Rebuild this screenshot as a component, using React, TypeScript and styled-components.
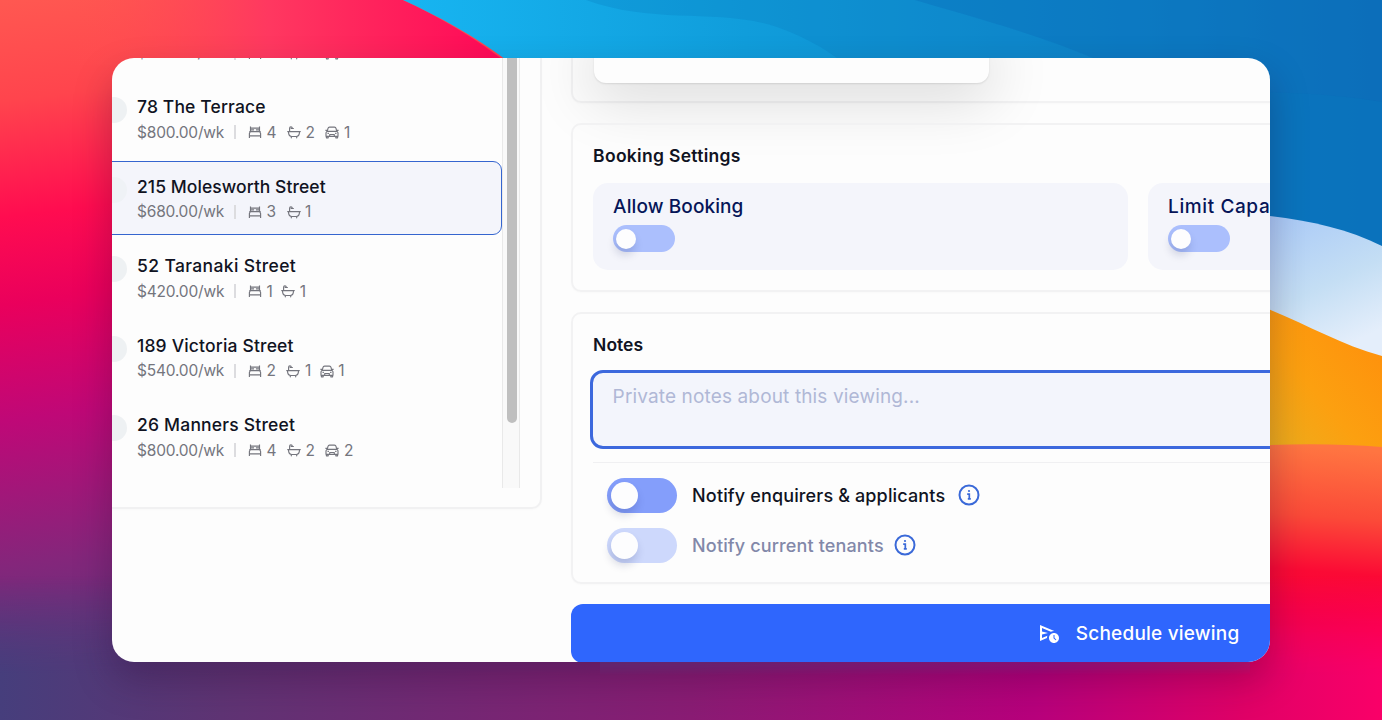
import React from "react";
import styled, { createGlobalStyle } from "styled-components";
import { MdOutlineScheduleSend } from "react-icons/md";

const GlobalStyle = createGlobalStyle`
  * { box-sizing: border-box; }
  body { margin: 0; overflow: hidden; font-family: Inter, "Open Sans", sans-serif; color: #101322; }
`;

const Desktop = styled.div`
  position: relative;
  width: 1382px;
  height: 720px;
  padding: 58px 112px;
  overflow: hidden;
  background: #16a5e5;
`;

const WallpaperSvg = styled.svg`
  position: absolute;
  inset: 0;
`;

const Window = styled.main`
  position: relative;
  display: flex;
  align-items: flex-start;
  gap: 30px;
  height: 604px;
  overflow: hidden;
  border-radius: 22px;
  background: #fdfdfd;
`;

const WindowShadow = styled.div`
  position: relative;
  border-radius: 22px;
  box-shadow: 0 18px 38px rgba(30, 5, 40, 0.27);
`;

const ListPanel = styled.section`
  flex: none;
  width: 470px;
  height: 452px;
  margin: -1px 0 0 -40px;
  padding: 0 20px 20px;
  border: 2px solid #f1f1f2;
  border-top: 0;
  border-radius: 0 0 10px 10px;
  box-shadow: 0 1px 2px rgba(0, 0, 0, 0.02);
`;

const Scroller = styled.div`
  display: flex;
  height: 431px;
  overflow: hidden;
`;

const Rows = styled.div`
  display: flex;
  flex: 1;
  flex-direction: column;
  gap: 5px;
  margin-top: -55.5px;
`;

const Row = styled.article<{ $selected?: boolean }>`
  display: flex;
  flex: none;
  gap: 10px;
  height: 74.5px;
  padding: 12px 15px 0 7px;
  border: 1px solid ${(p) => (p.$selected ? "#3565cf" : "transparent")};
  border-radius: 9px;
  background: ${(p) => (p.$selected ? "#f4f5fb" : "transparent")};
`;

const Avatar = styled.span<{ $selected?: boolean }>`
  flex: none;
  width: 26px;
  height: 26px;
  margin: 3px 0 0 -1px;
  border-radius: 50%;
  background: ${(p) => (p.$selected ? "#eff2f6" : "#eef1f3")};
`;

const Address = styled.h3<{ $spacing: number }>`
  margin: 0;
  padding-top: 1px;
  font-size: 17.5px;
  font-weight: 500;
  line-height: 24.5px;
  letter-spacing: ${(p) => p.$spacing}px;
  white-space: nowrap;
`;

const Facts = styled.div`
  display: flex;
  align-items: center;
  height: 25px;
  color: #74757d;
  font-size: 15.5px;
`;

const Price = styled.span`
  width: 87px;
  letter-spacing: -0.2px;
  white-space: nowrap;
`;

const Divider = styled.i`
  width: 2px;
  height: 14px;
  margin: 0 12px 0 10px;
  background: #dcdcdf;
`;

const Fact = styled.span<{ $narrow: boolean }>`
  display: flex;
  align-items: center;
  gap: 4.5px;
  margin-right: ${(p) => (p.$narrow ? 8.5 : 10.5)}px;
`;

const Track = styled.div`
  display: flex;
  justify-content: center;
  width: 18px;
  border: solid #e9e9e9;
  border-width: 0 1px 0 1px;
  background: #f9f9f9;
  padding-left: 1px;
`;

const Thumb = styled.div`
  width: 10px;
  height: 366px;
  border-radius: 0 0 5px 5px;
  background: #bfbfbf;
`;

const Form = styled.div`
  display: flex;
  flex: none;
  flex-direction: column;
  width: 1134px;
  margin-left: -0.9px;
`;

const Card = styled.section<{ $height: number }>`
  flex: none;
  height: ${(p) => p.$height}px;
  margin-bottom: 20px;
  padding: 0 20px;
  border: 2px solid #f2f2f3;
  border-radius: 10px;
  box-shadow: 0 1px 2px rgba(0, 0, 0, 0.02);
`;

const TopCard = styled(Card)`
  margin-top: -20px;
`;

const Popover = styled.div`
  width: 395.5px;
  height: 42.5px;
  margin-left: 0.5px;
  border-radius: 0 0 12px 12px;
  background: #fdfdfd;
  box-shadow: 0 1px 2px rgba(0, 0, 0, 0.1), 0 12px 60px 4px rgba(0, 0, 0, 0.15);
`;

const Heading = styled.h2<{ $spacing: number; $gap: number }>`
  margin: 19px 0 ${(p) => p.$gap}px;
  font-size: 17.5px;
  font-weight: 600;
  line-height: 24px;
  letter-spacing: ${(p) => p.$spacing}px;
`;

const Options = styled.div`
  display: grid;
  grid-template-columns: 535px 535px;
  gap: 20px;
`;

const Option = styled.div`
  height: 87.5px;
  padding: 10.2px 20px 0;
  border-radius: 15px;
  background: #f4f5fb;
`;

const OptionLabel = styled.div<{ $wide?: boolean }>`
  height: 28px;
  margin-bottom: 4.8px;
  color: #061558;
  font-size: 19px;
  font-weight: 500;
  line-height: 28px;
  letter-spacing: ${(p) => (p.$wide ? 0.6 : 0.1)}px;
  white-space: nowrap;
`;

const Switch = styled.div<{ $large?: boolean; $color: string }>`
  display: flex;
  align-items: center;
  flex: none;
  width: ${(p) => (p.$large ? 70 : 62)}px;
  height: ${(p) => (p.$large ? 35 : 27)}px;
  padding-left: ${(p) => (p.$large ? 4 : 3)}px;
  border-radius: 18px;
  background: ${(p) => p.$color};

  &::before {
    content: "";
    width: ${(p) => (p.$large ? 27 : 20)}px;
    height: ${(p) => (p.$large ? 27 : 20)}px;
    border-radius: 50%;
    background: #fdfdfe;
    box-shadow: -1px 6px 9px rgba(20, 30, 90, 0.17);
  }
`;

const NoteBox = styled.div`
  height: 79.5px;
  margin: 0 -3px 12.5px;
  padding: 9.2px 19.5px 0;
  border: 3px solid #3c68dd;
  border-radius: 13px;
  background: #f3f5fc;
  color: #b0b8d6;
  font-size: 19px;
  line-height: 30px;
  letter-spacing: 0.14px;
`;

const Notifications = styled.div`
  display: flex;
  flex-direction: column;
  gap: 15px;
  padding: 15px 14px 0;
  border-top: 1px solid #f0f0f2;
`;

const Notify = styled.div<{ $muted?: boolean }>`
  display: flex;
  align-items: center;
  height: 35px;
  color: ${(p) => (p.$muted ? "#8288a9" : "#101322")};
  font-size: 18px;
  font-weight: 500;
`;

const NotifyText = styled.span<{ $width: number }>`
  width: ${(p) => p.$width}px;
  margin: 0 12px 0 15px;
  letter-spacing: 0.14px;
  white-space: nowrap;
`;

const Submit = styled.button`
  display: flex;
  align-items: center;
  justify-content: center;
  gap: 15px;
  flex: none;
  width: 1134px;
  height: 59.5px;
  padding: 0;
  border: 0;
  border-radius: 12px;
  background: #2f66fd;
  color: #fff;
  font: 500 19px Inter, sans-serif;
  letter-spacing: 0.2px;
`;

const BedIcon = () => (
  <svg width="14" height="14" viewBox="0 0 14 14" fill="none" stroke="currentColor" strokeWidth="1.15" strokeLinejoin="round">
    <path d="M2.500 1.600v4.900M11.500 1.600v4.900M2.500 3.100h9M2.500 4.900h3.600M7.900 4.900h3.600M1.300 6.600h11.400M2.300 6.600l-.9 2v4.400M11.700 6.600l.9 2v4.400M1.400 10.900h11.200" />
  </svg>
);

const BathIcon = () => (
  <svg width="14" height="14" viewBox="0 0 14 14" fill="none" stroke="currentColor" strokeWidth="1.15" strokeLinecap="round" strokeLinejoin="round">
    <path d="M.7 6.600h12.600M1.500 6.800c0 3 .9 4.700 3.200 4.700h4.600c2.300 0 3.200-1.700 3.200-4.700M2.600 6.400V3.300c0-1.900 2.500-1.900 2.700-.2M4.100 3.500h2.300M4.300 11.600v1.200M9.700 11.600v1.200" />
  </svg>
);

const CarIcon = () => (
  <svg width="14" height="14" viewBox="0 0 14 14" fill="none" stroke="currentColor" strokeWidth="1.15" strokeLinejoin="round">
    <path d="M2.200 6.300 3 3.300c.2-.8.700-1.200 1.500-1.200h5c.8 0 1.300.4 1.500 1.200l.8 3M.4 5.400h1.700M11.900 5.400h1.700M2 6.300h10l1 1.500v3.500H1V7.800zM1.400 11.300v1.500h1.800v-1.500M10.800 11.300v1.500h1.800v-1.500M4.700 11.200V9.500h4.600v1.700M2.500 8.300h1.400M10.100 8.300h1.400" />
  </svg>
);

const InfoIcon = () => (
  <svg width="22" height="22" viewBox="0 0 22 22" fill="none" stroke="#3a69d8" strokeWidth="2">
    <circle cx="11" cy="11" r="9.500" />
    <path d="M9.200 10.100h2.100v4.600M9.800 14.800h3" strokeWidth="1.700" />
    <circle cx="11" cy="7" r="1.100" fill="#3a69d8" stroke="none" />
  </svg>
);

const Wallpaper = () => (
  <WallpaperSvg width="1382" height="720" viewBox="0 0 1382 720">
    <defs>
      <linearGradient id="left" gradientUnits="userSpaceOnUse" x1="0" y1="0" x2="90" y2="715">
        <stop offset="0" stopColor="#ff5851" />
        <stop offset=".14" stopColor="#ff444d" />
        <stop offset=".3" stopColor="#ff0c50" />
        <stop offset=".42" stopColor="#ea005c" />
        <stop offset=".58" stopColor="#bf0877" />
        <stop offset=".78" stopColor="#84267b" />
        <stop offset="1" stopColor="#463e7c" />
      </linearGradient>
      <linearGradient id="topRed">
        <stop offset="0" stopColor="#ff524f" stopOpacity="0" />
        <stop offset=".45" stopColor="#ff3860" />
        <stop offset="1" stopColor="#ff0757" />
      </linearGradient>
      <linearGradient id="blue">
        <stop offset="0" stopColor="#17b5f1" />
        <stop offset=".35" stopColor="#109ddb" />
        <stop offset=".75" stopColor="#1085cb" />
        <stop offset="1" stopColor="#1070bc" />
      </linearGradient>
      <linearGradient id="ice" x1="0" y1="0" x2=".4" y2="1">
        <stop offset="0" stopColor="#a6c7f8" />
        <stop offset=".6" stopColor="#c4def4" />
        <stop offset="1" stopColor="#e4eefb" />
      </linearGradient>
      <linearGradient id="orange" x1="1" y1="0" x2="0" y2="1">
        <stop offset="0" stopColor="#ff8c0b" />
        <stop offset=".55" stopColor="#fca010" />
        <stop offset="1" stopColor="#e8b121" />
      </linearGradient>
      <linearGradient id="right" gradientUnits="userSpaceOnUse" x1="1290" y1="445" x2="1270" y2="720">
        <stop offset="0" stopColor="#ff7541" />
        <stop offset=".25" stopColor="#fb4a38" />
        <stop offset=".45" stopColor="#fb0a35" />
        <stop offset=".65" stopColor="#fc003c" />
        <stop offset="1" stopColor="#fc0070" />
      </linearGradient>
      <linearGradient id="bottom">
        <stop offset="0" stopColor="#463e7c" />
        <stop offset=".16" stopColor="#5f3474" />
        <stop offset=".5" stopColor="#8a1c74" />
        <stop offset=".75" stopColor="#b8007c" />
        <stop offset=".9" stopColor="#e00067" />
        <stop offset="1" stopColor="#fa0068" />
      </linearGradient>
      <linearGradient id="fade" x1="0" y1="0" x2="0" y2="1">
        <stop offset=".1" stopColor="#000" />
        <stop offset=".72" stopColor="#fff" />
      </linearGradient>
      <mask id="edgeMask">
        <rect y="560" width="1382" height="160" fill="url(#fade)" />
      </mask>
    </defs>
    <path d="M0 0H600V720H0z" fill="url(#left)" />
    <path d="M70 0H403C440 17 475 38 510 65H70z" fill="url(#topRed)" />
    <path d="M403 0C440 17 475 36 513 65V300H1382V0z" fill="url(#blue)" />
    <path d="M586 0C660 27 730 5 790 32C820 45 840 58 850 70V300H1382V0z" fill="#0877bd" fillOpacity=".25" />
    <path d="M915 0C990 22 1040 35 1110 65V300H1382V0z" fill="#0b66b5" fillOpacity=".3" />
    <path d="M1260 92Q1330 93 1382 102V260H1260z" fill="#0876bd" fillOpacity=".5" />
    <path d="M1250 214C1300 218 1344 227 1382 246V365H1250z" fill="url(#ice)" />
    <path d="M1250 302C1300 320 1335 343 1382 356V455H1250z" fill="url(#orange)" />
    <path d="M1250 446Q1320 442 1382 447V720H1250z" fill="url(#right)" />
    <path d="M0 560H1382V720H0z" fill="url(#bottom)" mask="url(#edgeMask)" />
  </WallpaperSvg>
);

type Listing = {
  address: string;
  price: string;
  beds: number;
  baths: number;
  cars?: number;
  spacing: number;
  selected?: boolean;
};

const listings: Listing[] = [
  { address: "14 Cuba Street", price: "$650.00/wk", beds: 3, baths: 2, cars: 1, spacing: 0 },
  { address: "78 The Terrace", price: "$800.00/wk", beds: 4, baths: 2, cars: 1, spacing: 0.14 },
  { address: "215 Molesworth Street", price: "$680.00/wk", beds: 3, baths: 1, spacing: 0.06, selected: true },
  { address: "52 Taranaki Street", price: "$420.00/wk", beds: 1, baths: 1, spacing: 0.37 },
  { address: "189 Victoria Street", price: "$540.00/wk", beds: 2, baths: 1, cars: 1, spacing: 0.17 },
  { address: "26 Manners Street", price: "$800.00/wk", beds: 4, baths: 2, cars: 2, spacing: 0.2 },
];

export default function App() {
  return (
    <Desktop>
      <GlobalStyle />
      <Wallpaper />
      <WindowShadow>
        <Window>
          <ListPanel>
            <Scroller>
              <Rows>
                {listings.map((l) => (
                  <Row key={l.address} $selected={l.selected}>
                    <Avatar $selected={l.selected} />
                    <div>
                      <Address $spacing={l.spacing}>{l.address}</Address>
                      <Facts>
                        <Price>{l.price}</Price>
                        <Divider />
                        <Fact $narrow={l.beds === 1}><BedIcon />{l.beds}</Fact>
                        <Fact $narrow={l.baths === 1}><BathIcon />{l.baths}</Fact>
                        {l.cars && <Fact $narrow={l.cars === 1}><CarIcon />{l.cars}</Fact>}
                      </Facts>
                    </div>
                  </Row>
                ))}
              </Rows>
              <Track><Thumb /></Track>
            </Scroller>
          </ListPanel>
          <Form>
            <TopCard $height={64.5}>
              <Popover />
            </TopCard>
            <Card $height={169.5}>
              <Heading $spacing={0.3} $gap={15}>Booking Settings</Heading>
              <Options>
                <Option>
                  <OptionLabel>Allow Booking</OptionLabel>
                  <Switch $color="#abbffd" />
                </Option>
                <Option>
                  <OptionLabel $wide>Limit Capacity</OptionLabel>
                  <Switch $color="#abbffd" />
                </Option>
              </Options>
            </Card>
            <Card $height={271.5}>
              <Heading $spacing={0} $gap={12.5}>Notes</Heading>
              <NoteBox>Private notes about this viewing...</NoteBox>
              <Notifications>
                <Notify>
                  <Switch $large $color="#849efb" />
                  <NotifyText $width={253.5}>Notify enquirers &amp; applicants</NotifyText>
                  <InfoIcon />
                </Notify>
                <Notify $muted>
                  <Switch $large $color="#cdd8fc" />
                  <NotifyText $width={190}>Notify current tenants</NotifyText>
                  <InfoIcon />
                </Notify>
              </Notifications>
            </Card>
            <Submit>
              <MdOutlineScheduleSend size={24} />
              Schedule viewing
            </Submit>
          </Form>
        </Window>
      </WindowShadow>
    </Desktop>
  );
}
